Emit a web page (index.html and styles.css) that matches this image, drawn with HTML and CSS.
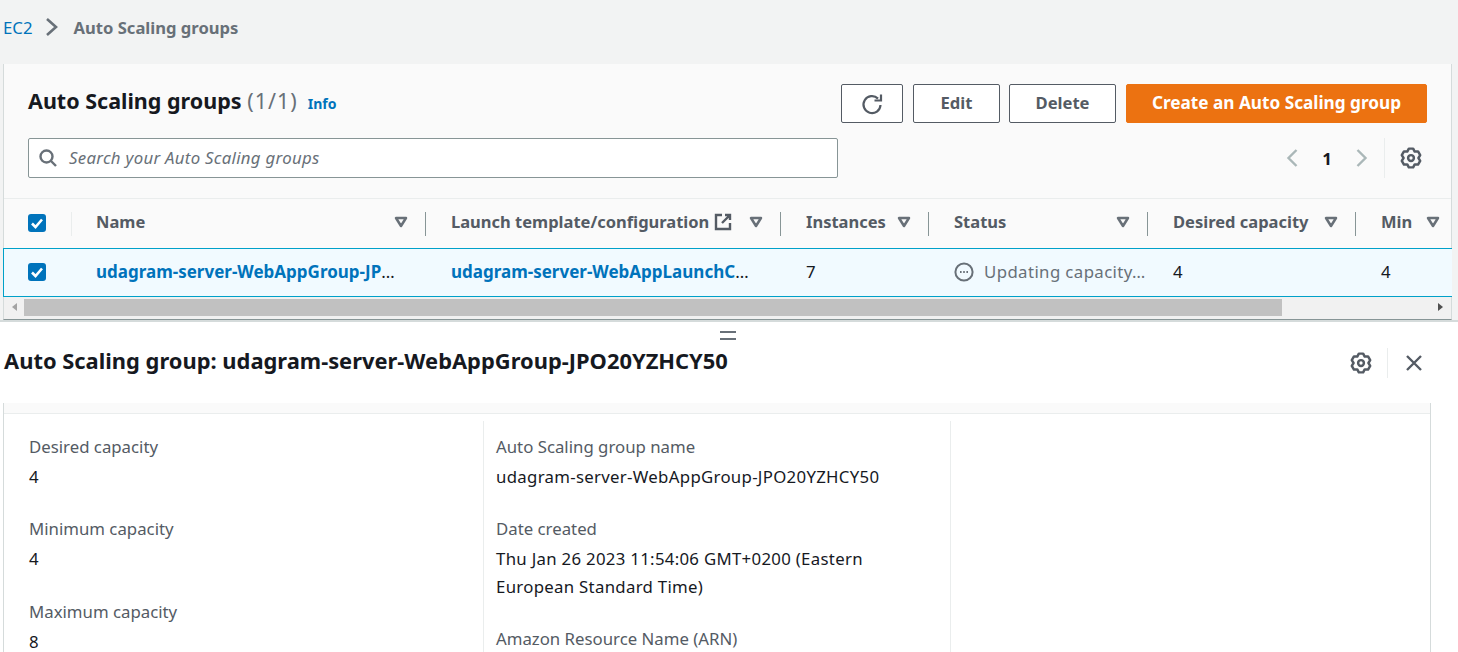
FILE: index.html
```html
<!DOCTYPE html>
<html lang="en">
<head>
<meta charset="utf-8">
<title>Auto Scaling groups</title>
<link rel="stylesheet" href="styles.css">
</head>
<body>
  <nav class="crumbs">
    <a class="crumb-link">EC2</a>
    <svg class="crumb-sep" viewBox="0 0 16 20"><path d="M3 2l9 8-9 8"/></svg>
    <span class="crumb-here">Auto Scaling groups</span>
  </nav>

  <section class="panel">
    <div class="panel-head">
      <div class="title-row">
        <h1 class="title">Auto Scaling groups <span class="count">(1/1)</span></h1>
        <a class="info">Info</a>
        <div class="actions">
          <button class="btn btn-icon"><svg class="ico" viewBox="0 0 20 20"><path d="M18.5 11A8.5 8.5 0 1 1 16 4.6"/><path d="M19 0.5v6h-6.5"/></svg></button>
          <button class="btn btn-edit">Edit</button>
          <button class="btn btn-delete">Delete</button>
          <button class="btn btn-primary">Create an Auto Scaling group</button>
        </div>
      </div>
      <div class="tool-row">
        <div class="search">
          <svg class="search-ico" viewBox="0 0 18 18"><circle cx="7.5" cy="7.5" r="6"/><path d="M12 12l5 5"/></svg>
          <span class="search-text">Search your Auto Scaling groups</span>
        </div>
        <div class="pager">
          <svg class="pg-arrow" viewBox="0 0 12 20"><path d="M10 2l-8 8 8 8"/></svg>
          <span class="pg-num">1</span>
          <svg class="pg-arrow" viewBox="0 0 12 20"><path d="M2 2l8 8-8 8"/></svg>
        </div>
        <div class="gear-cell">
          <svg class="gear" viewBox="0 0 16 16"><path d="M9.57 1.18H6.43L5.3 3.32 2.88 3.23 1.31 5.95 2.6 8 1.31 10.05 2.88 12.77 5.3 12.68 6.43 14.82H9.57L10.7 12.68 13.12 12.77 14.69 10.05 13.4 8 14.69 5.95 13.12 3.23 10.7 3.32Z"/><circle cx="8" cy="8" r="2.1"/></svg>
        </div>
      </div>
    </div>

    <div class="grid-row grid-head">
      <div class="cell cell-check cell-faint"><span class="check"><svg viewBox="0 0 18 18"><path d="M4 9.5l3.5 3.5L14 5.5"/></svg></span></div>
      <div class="cell cell-name">Name<svg class="caret" viewBox="0 0 14 12"><path d="M2 2h10l-5 8z"/></svg></div>
      <div class="cell">Launch template/configuration
        <svg class="ext" viewBox="0 0 18 18"><path d="M8 2H2v14h14v-6"/><path d="M11 2h5v5M16 2L8 10"/></svg>
        <svg class="caret" viewBox="0 0 14 12"><path d="M2 2h10l-5 8z"/></svg></div>
      <div class="cell">Instances<svg class="caret" viewBox="0 0 14 12"><path d="M2 2h10l-5 8z"/></svg></div>
      <div class="cell">Status<svg class="caret" viewBox="0 0 14 12"><path d="M2 2h10l-5 8z"/></svg></div>
      <div class="cell">Desired capacity<svg class="caret" viewBox="0 0 14 12"><path d="M2 2h10l-5 8z"/></svg></div>
      <div class="cell cell-last">Min<svg class="caret" viewBox="0 0 14 12"><path d="M2 2h10l-5 8z"/></svg></div>
    </div>

    <div class="grid-row grid-selected">
      <div class="cell cell-check"><span class="check"><svg viewBox="0 0 18 18"><path d="M4 9.5l3.5 3.5L14 5.5"/></svg></span></div>
      <div class="cell cell-name"><a class="row-link">udagram-server-WebAppGroup-JP<span class="dots-dark">…</span></a></div>
      <div class="cell"><a class="row-link">udagram-server-WebAppLaunchC<span class="dots-dark">…</span></a></div>
      <div class="cell">7</div>
      <div class="cell">
        <svg class="status-ico" viewBox="0 0 20 20"><circle cx="10" cy="10" r="8.6"/><path d="M6 10h1.6M9.2 10h1.6M12.4 10H14"/></svg>
        <span class="status-text">Updating capacity…</span>
      </div>
      <div class="cell">4</div>
      <div class="cell cell-last">4</div>
    </div>

    <div class="scrollbar">
      <span class="sb-arrow sb-left"></span>
      <span class="sb-thumb"></span>
      <span class="sb-arrow sb-right"></span>
    </div>
  </section>

  <section class="split">
    <div class="handle"></div>
    <div class="split-head">
      <h2 class="split-title">Auto Scaling group: udagram-server-WebAppGroup-JPO20YZHCY50</h2>
      <svg class="gear" viewBox="0 0 16 16"><path d="M9.57 1.18H6.43L5.3 3.32 2.88 3.23 1.31 5.95 2.6 8 1.31 10.05 2.88 12.77 5.3 12.68 6.43 14.82H9.57L10.7 12.68 13.12 12.77 14.69 10.05 13.4 8 14.69 5.95 13.12 3.23 10.7 3.32Z"/><circle cx="8" cy="8" r="2.1"/></svg>
      <span class="split-sep"></span>
      <svg class="close" viewBox="0 0 18 18"><path d="M2 2l14 14M16 2L2 16"/></svg>
    </div>

    <div class="card">
      <div class="card-band"></div>
      <div class="columns">
        <div class="col">
          <div class="field"><div class="label">Desired capacity</div><div class="value">4</div></div>
          <div class="field"><div class="label">Minimum capacity</div><div class="value">4</div></div>
          <div class="field"><div class="label">Maximum capacity</div><div class="value">8</div></div>
        </div>
        <div class="col">
          <div class="field"><div class="label">Auto Scaling group name</div><div class="value">udagram-server-WebAppGroup-JPO20YZHCY50</div></div>
          <div class="field"><div class="label">Date created</div><div class="value">Thu Jan 26 2023 11:54:06 GMT+0200 (Eastern European Standard Time)</div></div>
          <div class="field"><div class="label">Amazon Resource Name (ARN)</div></div>
        </div>
        <div class="col col-empty"></div>
      </div>
    </div>
  </section>
</body>
</html>
```

FILE: styles.css
```css
* { box-sizing: border-box; }
html, body { height: 100%; }
body {
  margin: 0; height: 652px; overflow: hidden; background: #fff; color: #16191f;
  font-family: "Noto Sans", "Open Sans", Arial, sans-serif; font-size: 16.8px;
}
svg { display: block; flex: none; fill: none; }

/* breadcrumb */
.crumbs {
  height: 64px; padding: 0 0 10px 3px; background: #f2f3f3;
  display: flex; align-items: center;
}
.crumb-link { color: #0073bb; }
.crumb-sep { width: 16px; height: 20px; margin: 0 14px 0 11px; stroke: #687078; stroke-width: 2.6; }
.crumb-here { color: #687078; font-weight: 700; font-size: 16.6px; }

/* top panel */
.panel {
  margin-left: 3px; margin-right: 6px; background: #fafafa;
  border-left: 1px solid #d5dbdb; border-right: 1px solid #d5dbdb;
  border-bottom: 1px solid #879596; box-shadow: 6px 0 0 #f2f3f3, -3px 0 0 #f2f3f3;
  height: 256px; display: flex; flex-direction: column;
}
.panel-head { height: 135px; padding: 20px 24px 0 24px; border-bottom: 1px solid #eaeded; }
.title-row { display: flex; align-items: center; height: 39px; }
.title { margin: 0 0 6px; font-size: 21.5px; font-weight: 700; line-height: 36px; }
.count { color: #687078; font-weight: 400; letter-spacing: 1px; }
.info { margin-left: 10px; font-size: 14px; font-weight: 700; color: #0073bb; }
.actions { margin-left: auto; display: flex; gap: 10px; }
.btn {
  height: 39px; font: 700 16.6px "Noto Sans", Arial, sans-serif; color: #545b64;
  background: #fff; border: 1px solid #545b64; border-radius: 2px; padding: 0 0 2px;
  display: flex; align-items: center; justify-content: center;
}
.btn-icon { width: 62px; padding: 0; }
.btn-edit { width: 87px; }
.btn-delete { width: 107px; margin-left: -1px; }
.btn-primary { width: 301px; font-size: 17.2px; color: #fff; background: #ec7211; border-color: #ec7211; }
.ico { width: 20px; height: 20px; stroke: #545b64; stroke-width: 2.2; overflow: visible; }

.tool-row { display: flex; align-items: center; margin-top: 15px; height: 40px; }
.search {
  width: 810px; height: 40px; background: #fff; border: 1px solid #879596; border-radius: 2px;
  display: flex; align-items: center; padding-left: 10px;
}
.search-ico { width: 18px; height: 18px; stroke: #687078; stroke-width: 2.4; }
.search-text { margin-left: 12px; margin-bottom: 2px; font-style: italic; color: #687078; letter-spacing: .3px; }
.pager { margin-left: auto; display: flex; align-items: center; }
.pg-arrow { width: 13px; height: 20px; stroke: #aab7b8; stroke-width: 2.4; }
.pg-num { width: 56px; text-align: center; font-weight: 700; }
.gear-cell {
  margin-left: 16px; height: 40px; padding-left: 15px; padding-right: 5px;
  border-left: 1px solid #eaeded; display: flex; align-items: center;
}
.gear { width: 22px; height: 22px; stroke: #545b64; stroke-width: 1.8; stroke-linejoin: round; }

/* table */
.grid-row {
  display: grid; grid-template-columns: 68px 354px 355px 148px 219px 208px 96px;
  align-items: center;
}
.grid-head { height: 49px; font-weight: 700; font-size: 16.5px; color: #545b64; }
.grid-selected {
  height: 49px; background: #f1faff;
  border-top: 1px solid #00a1c9; border-bottom: 1px solid #00a1c9; border-left: 1px solid #00a1c9;
  margin-left: -1px; margin-right: -1px; grid-template-columns: 68px 354px 355px 148px 219px 208px 97px;
}
.cell { display: flex; align-items: center; padding-left: 25px; padding-bottom: 2px; white-space: nowrap; min-width: 0; }
.grid-head .cell { height: 24px; border-right: 1px solid #879596; padding-right: 17px; padding-bottom: 5px; }
.grid-head .cell-faint { border-right-color: #eaeded; }
.grid-head .cell-last { border-right: 0; padding-right: 12px; }
.cell.cell-check { padding: 0 0 1px 24px; }
.cell.cell-name { padding-left: 24px; }
.check { width: 18px; height: 18px; border-radius: 3px; background: #0073bb; display: block; }
.check svg { width: 18px; height: 18px; stroke: #fff; stroke-width: 2.6; }
.caret { width: 14px; height: 12px; margin-left: auto; margin-top: 2px; stroke: #687078; stroke-width: 2.5; stroke-linejoin: round; }
.ext { width: 18px; height: 18px; margin-left: 5px; margin-top: 2px; stroke: #545b64; stroke-width: 2.4; }
.row-link { color: #0073bb; font-weight: 700; font-size: 17px; display: block; }
.dots-dark { color: #16191f; font-weight: 400; }
.status-ico { width: 20px; height: 20px; stroke: #687078; stroke-width: 2; }
.status-text { margin-left: 10px; color: #687078; letter-spacing: .4px; }

.scrollbar { height: 22px; background: #f1f1f1; position: relative; }
.sb-thumb { position: absolute; left: 20px; width: 1258px; top: 2px; height: 17px; background: #c1c1c1; }
.sb-arrow { position: absolute; top: 6px; width: 0; height: 0; border-top: 4px solid transparent; border-bottom: 4px solid transparent; }
.sb-left { left: 8px; border-right: 5px solid #a3a3a3; }
.sb-right { right: 8px; border-left: 5px solid #505050; }

/* split panel */
.split { position: relative; border-top: 2px solid #d5dbdb; height: 332px; overflow: hidden; }
.handle {
  position: absolute; left: 720px; top: 9px; width: 16px; height: 9px;
  border-top: 2px solid #687078; border-bottom: 2px solid #687078;
}
.split-head { height: 81px; padding: 0 35px 0 4px; display: flex; align-items: center; }
.split-title { margin: 0 auto 4px 0; font-size: 21.9px; font-weight: 700; }
.split-sep { width: 1px; height: 30px; background: #eaeded; margin: 0 17px 0 15px; }
.close { width: 18px; height: 18px; stroke: #545b64; stroke-width: 2.4; }
.card { margin-left: 3px; width: 1428px; border-left: 1px solid #d5dbdb; border-right: 1px solid #d5dbdb; }
.card-band { height: 11px; background: #fafafa; border-bottom: 1px solid #eaeded; }
.columns { display: grid; grid-template-columns: 480px 467px 1fr; margin-top: 7px; }
.col { padding: 12px 25px 0; border-right: 1px solid #eaeded; height: 231px; overflow: hidden; }
.col + .col { padding-left: 12px; }
.col-empty { border-right: 0; }
.field { margin-bottom: 24.4px; }
.col + .col .field { margin-bottom: 24px; }
.label { color: #545b64; line-height: 28px; margin-bottom: 2px; }
.value { line-height: 28px; letter-spacing: .3px; }
```
